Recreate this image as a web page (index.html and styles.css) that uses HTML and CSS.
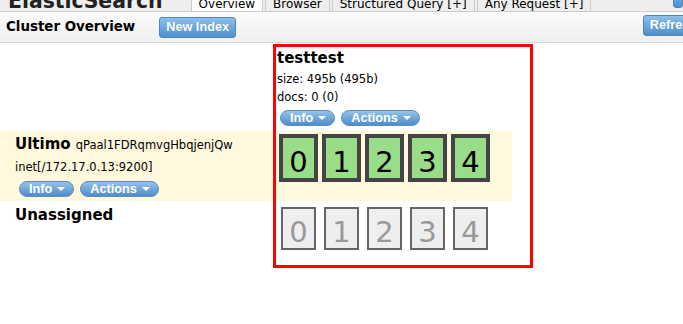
FILE: index.html
```html
<!DOCTYPE html>
<html lang="en">
  <head>
    <meta charset="UTF-8" />
    <meta name="viewport" content="width=device-width, initial-scale=1.0" />
    <title>ElasticSearch Head</title>
    <link rel="stylesheet" href="styles.css">
  </head>
  <body>
    <div class="page">
      <div class="header">
        <div class="title">ElasticSearch</div>
        <ul class="tabs">
          <li class="tab active">Overview</li>
          <li class="tab">Browser</li>
          <li class="tab">Structured Query [+]</li>
          <li class="tab">Any Request [+]</li>
        </ul>
        <div class="connect"></div>
      </div>

      <div class="toolbar">
        <h2>Cluster Overview</h2>
        <button class="btn">New Index</button>
        <button class="btn refresh">Refresh</button>
      </div>

      <div class="overview">
        <table class="cluster">
          <tr>
            <td class="nodeCell"></td>
            <td class="indexCell">
              <div class="name">testtest</div>
              <div class="stat">size: 495b (495b)</div>
              <div class="stat">docs: 0 (0)</div>
              <div class="menus">
                <span class="pill">Info <i class="caret"></i></span>
                <span class="pill">Actions <i class="caret"></i></span>
              </div>
            </td>
          </tr>

          <tr class="nodeRow">
            <td class="nodeCell">
              <div class="name">Ultimo <span class="nodeId">qPaal1FDRqmvgHbqjenjQw</span></div>
              <div class="addr">inet[/172.17.0.13:9200]</div>
              <div class="menus">
                <span class="pill">Info <i class="caret"></i></span>
                <span class="pill">Actions <i class="caret"></i></span>
              </div>
            </td>
            <td class="shardCell">
              <div class="shards">
                <div class="shard">0</div>
                <div class="shard">1</div>
                <div class="shard">2</div>
                <div class="shard">3</div>
                <div class="shard">4</div>
              </div>
            </td>
          </tr>

          <tr class="unassignedRow">
            <td class="nodeCell">
              <div class="name">Unassigned</div>
            </td>
            <td class="shardCell">
              <div class="shards">
                <div class="shard unassigned">0</div>
                <div class="shard unassigned">1</div>
                <div class="shard unassigned">2</div>
                <div class="shard unassigned">3</div>
                <div class="shard unassigned">4</div>
              </div>
            </td>
          </tr>
        </table>

        <!-- selected index highlight -->
        <div class="highlight"></div>
      </div>
    </div>
  </body>
</html>
```

FILE: styles.css
```css
* {
  margin: 0;
  padding: 0;
  box-sizing: border-box;
}

html {
  overflow: hidden;
  background: #fff;
}

body {
  min-height: 100vh;
  font-family: "DejaVu Sans", Verdana, sans-serif;
  color: #000;
}

.page {
  width: 710px;
}

/* Header (scrolled, only the bottom shows) */

.header {
  display: flex;
  align-items: flex-end;
  height: 12px;
  overflow: hidden;
  background-color: #eee;
  border-bottom: 1px solid #ccc;
}

.title {
  margin: 0 28px 0 8px;
  font-size: 20.4px;
  font-weight: bold;
  line-height: 20px;
  color: #222;
  flex-shrink: 0;
}

.tabs {
  display: flex;
  list-style: none;
}

.tab {
  margin-right: 2px;
  padding: 3px 7px 0;
  font-size: 12px;
  line-height: 14px;
  border: 1px solid #ccc;
  border-bottom: none;
  background-color: #eee;
  white-space: nowrap;
}

.tab.active {
  background-color: #fff;
}

.connect {
  margin-left: auto;
  margin-right: 27px;
  width: 10px;
  height: 20px;
  margin-bottom: 3px;
  border: 1px solid #4a86c0;
  border-radius: 3px;
  background-image: linear-gradient(#8dbfe9, #4d8fcf);
}

/* Toolbar */

.toolbar {
  display: flex;
  align-items: center;
  height: 31px;
  padding: 0 6px;
  background-image: linear-gradient(#fbfbfb, #efefef);
  border-bottom: 1px solid #d4d4d4;
}

.toolbar h2 {
  font-size: 13.4px;
  line-height: 16px;
  font-weight: bold;
}

.btn {
  margin-left: 24px;
  height: 21px;
  padding: 0 6px;
  font-family: "Liberation Sans", Arial, sans-serif;
  font-size: 12.7px;
  font-weight: bold;
  color: #fff;
  border: 1px solid #4a86c0;
  border-radius: 3px;
  background-image: linear-gradient(#8cc0ea, #4f8fcd);
  text-shadow: 0 0 1px rgba(0, 0, 0, 0.2);
}

.btn.refresh {
  margin-left: auto;
  margin-bottom: 4px;
}

/* Cluster table */

.overview {
  position: relative;
  min-height: 240px;
}

.cluster {
  border-collapse: collapse;
  border-spacing: 0;
  width: 512px;
}

.cluster td {
  vertical-align: top;
  padding: 0;
}

.nodeCell {
  width: 274px;
  padding-left: 15px !important;
}

.indexCell,
.shardCell {
  padding-left: 3px !important;
}

.indexCell {
  padding-top: 4px !important;
  padding-bottom: 5px !important;
}

.name {
  font-size: 15px;
  font-weight: bold;
  line-height: 23px;
  white-space: nowrap;
}

.nodeId {
  font-size: 11.5px;
  font-weight: normal;
}

.stat {
  font-size: 11.5px;
  line-height: 18px;
}

.addr {
  font-size: 11.5px;
  line-height: 20px;
}

.menus {
  display: flex;
  gap: 6px;
  margin-top: 4px;
  margin-left: 3px;
}

.nodeCell .menus {
  margin-left: 4px;
}

.pill {
  display: inline-flex;
  align-items: center;
  gap: 5px;
  height: 16px;
  padding: 0 8px 0 9px;
  font-family: "Liberation Sans", Arial, sans-serif;
  font-size: 12.7px;
  font-weight: bold;
  color: #fff;
  border: 1px solid #5b8ec3;
  border-radius: 8px;
  background-image: linear-gradient(#93c3ea, #4f8dcb);
}

.caret {
  display: inline-block;
  width: 0;
  height: 0;
  border-left: 4px solid transparent;
  border-right: 4px solid transparent;
  border-top: 4px solid #fff;
}

.nodeRow td {
  background-color: #fff8dc;
}

.nodeRow .nodeCell {
  padding-top: 2px !important;
  padding-bottom: 4px !important;
}

.nodeRow .shardCell {
  padding-top: 3px !important;
}

.unassignedRow td {
  padding-top: 3px !important;
  padding-bottom: 10px !important;
}

.shards {
  display: flex;
}

.shard {
  width: 39px;
  height: 48px;
  margin: 0 2px;
  padding-top: 10px;
  font-size: 29px;
  line-height: 29px;
  text-align: center;
  border: 4px solid #444;
  background-color: #99dd88;
}

.shard.unassigned {
  width: 35px;
  height: 43px;
  margin: 3px 4px 0;
  padding-top: 9px;
  color: #999;
  border: 2px solid #666;
  background-color: #eee;
}

.highlight {
  position: absolute;
  left: 273px;
  top: 1px;
  width: 260px;
  height: 224px;
  border: 3px solid #f00;
  pointer-events: none;
}
```
